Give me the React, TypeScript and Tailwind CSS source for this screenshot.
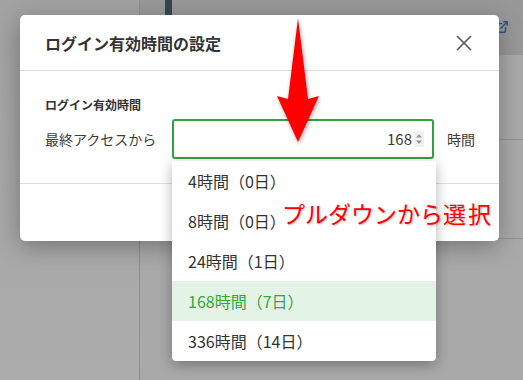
import { ExternalLink, X } from 'lucide-react';

const options = [
  { label: '4時間（0日）', active: false },
  { label: '8時間（0日）', active: false },
  { label: '24時間（1日）', active: false },
  { label: '168時間（7日）', active: true },
  { label: '336時間（14日）', active: false },
];

function Spinner() {
  return (
    <svg width="10" height="16" viewBox="0 0 10 16" className="ml-[2px]">
      <rect x="0" y="0" width="10" height="16" fill="#f1f1f1" />
      <path d="M2 6.5 L5 3 L8 6.5 Z" fill="#9a9a9a" />
      <path d="M2 9.5 L5 13 L8 9.5 Z" fill="#9a9a9a" />
    </svg>
  );
}

function RedArrow() {
  return (
    <svg
      width="60"
      height="140"
      viewBox="0 0 60 140"
      className="absolute left-[268px] top-[12px] drop-shadow-[1px_2px_2px_rgba(0,0,0,0.35)]"
    >
      <path d="M30 6 L40 87 L51 84 L30 130 L9 84 L20 87 Z" fill="#ff0000" />
    </svg>
  );
}

export default function App() {
  return (
    <div
      className="relative w-[523px] h-[380px] overflow-hidden bg-[#a8a8a8]"
      style={{ fontFamily: '"Noto Sans CJK JP", "Noto Sans", sans-serif' }}
    >
      {/* page behind the overlay */}
      <div className="flex h-full">
        <div className="w-[140px] shrink-0 border-r border-[#8f8f8f] bg-gradient-to-b from-[#a2a2a2] to-[#acacac]" />
        <div className="flex flex-1 flex-col">
          <div className="flex h-[55px] bg-[#989898]">
            <div className="ml-[25px] h-[15px] w-[7px] bg-[#37474f]" />
          </div>
          <div className="flex flex-1 flex-col bg-[#a9a9a9]">
            <div className="h-[85px] border-b border-[#949494]" />
            <div className="h-[99px] border-b border-[#949494]" />
          </div>
        </div>
      </div>
      <ExternalLink className="absolute left-[495px] top-[20px] text-[#24578a]" size={14} strokeWidth={2.4} />

      {/* modal */}
      <div className="absolute left-[20px] top-[15px] flex h-[226px] w-[479px] flex-col rounded-[5px] bg-white shadow-[0_6px_24px_rgba(0,0,0,0.3)]">
        <div className="flex h-[56px] shrink-0 items-center justify-between border-b border-[#dedede] pl-[25px] pr-[22px]">
          <span className="text-[16px] font-bold text-[#333]">ログイン有効時間の設定</span>
          <X size={26} strokeWidth={1.5} className="text-[#555]" />
        </div>
        <div className="flex flex-col border-b border-[#dedede] px-[25px] pb-[24px] pt-[25px]">
          <div className="mb-[5px] text-[12px] font-bold leading-[18px] text-[#333]">ログイン有効時間</div>
          <div className="flex items-center whitespace-nowrap">
            <span className="w-[127px] shrink-0 text-[14px] text-[#3c3c3c]">最終アクセスから</span>
            <div className="flex h-[40px] w-[262px] shrink-0 items-center justify-end rounded-[3px] border-2 border-[#2fa33c] pr-[8px]">
              <span className="text-[15px] text-[#3c3c3c]">168</span>
              <Spinner />
            </div>
            <span className="ml-[13px] shrink-0 text-[14px] text-[#3c3c3c]">時間</span>
          </div>
        </div>
        <div className="flex-1" />
      </div>

      {/* dropdown */}
      <div className="absolute left-[172px] top-[161px] w-[264px] overflow-hidden rounded-b-[4px] bg-white shadow-[0_4px_14px_rgba(0,0,0,0.3)]">
        {options.map((o) => (
          <div
            key={o.label}
            className={
              o.active
                ? 'flex h-[40px] items-center bg-[#e3f3e5] px-[16px] text-[16px] text-[#34a83b]'
                : 'flex h-[40px] items-center px-[16px] text-[16px] text-[#333]'
            }
          >
            {o.label}
          </div>
        ))}
      </div>

      <RedArrow />

      <div className="absolute left-[282px] top-[198px] whitespace-nowrap text-[23px] leading-[30px] text-[#ff0000] [text-shadow:1px_1px_2px_rgba(0,0,0,0.25)]">
        プルダウンから選<span className="ml-[2px]">択</span>
      </div>
    </div>
  );
}
